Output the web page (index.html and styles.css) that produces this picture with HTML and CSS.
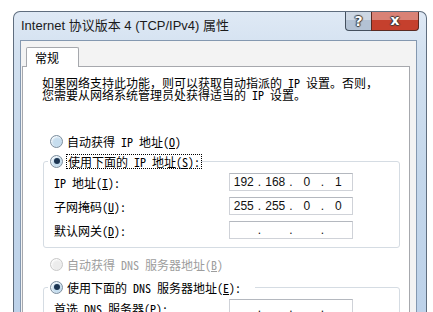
FILE: index.html
```html
<!DOCTYPE html>
<html lang="zh-CN">
<head>
<meta charset="utf-8">
<title>Internet 协议版本 4 (TCP/IPv4) 属性</title>
<link rel="stylesheet" href="styles.css">
</head>
<body>
<div class="window">
  <div class="titlebar">
    <span class="title">Internet 协议版本 4 (TCP/IPv4) 属性</span>
    <div class="caption-btns">
      <div class="cbtn help"><span class="hl"></span><span class="glyph">?</span></div>
      <div class="cbtn close"><span class="hl"></span><span class="glyph">x</span></div>
    </div>
  </div>
  <div class="client">
    <div class="tabs"><div class="tab">常规</div></div>
    <div class="panel">
      <p class="desc">如果网络支持此功能，则可以获取自动指派的 IP 设置。否则，<br>您需要从网络系统管理员处获得适当的 IP 设置。</p>

      <div class="opt opt-first"><span class="radio"></span><span class="lbl">自动获得 IP 地址(<u>O</u>)</span></div>

      <fieldset class="group">
        <legend><div class="opt"><span class="radio checked"></span><span class="lbl focus">使用下面的 IP 地址(<u>S</u>):</span></div></legend>
        <div class="row"><span class="rlabel">IP 地址(<u>I</u>):</span><div class="ipbox"><span class="seg">192</span><span class="dot">.</span><span class="seg">168</span><span class="dot">.</span><span class="seg">0</span><span class="dot">.</span><span class="seg">1</span></div></div>
        <div class="row"><span class="rlabel">子网掩码(<u>U</u>):</span><div class="ipbox"><span class="seg">255</span><span class="dot">.</span><span class="seg">255</span><span class="dot">.</span><span class="seg">0</span><span class="dot">.</span><span class="seg">0</span></div></div>
        <div class="row"><span class="rlabel">默认网关(<u>D</u>):</span><div class="ipbox"><span class="seg"></span><span class="dot">.</span><span class="seg"></span><span class="dot">.</span><span class="seg"></span><span class="dot">.</span><span class="seg"></span></div></div>
      </fieldset>

      <div class="opt opt-dns disabled"><span class="radio"></span><span class="lbl">自动获得 DNS 服务器地址(<u>B</u>)</span></div>

      <fieldset class="group group-dns">
        <legend><div class="opt"><span class="radio checked"></span><span class="lbl wide">使用下面的 DNS 服务器地址(<u>E</u>):</span></div></legend>
        <div class="row"><span class="rlabel">首选 DNS 服务器(<u>P</u>):</span><div class="ipbox"><span class="seg"></span><span class="dot">.</span><span class="seg"></span><span class="dot">.</span><span class="seg"></span><span class="dot">.</span><span class="seg"></span></div></div>
      </fieldset>
    </div>
  </div>
</div>
</body>
</html>
```
FILE: styles.css
```css
* {
  -webkit-print-color-adjust: exact;
  print-color-adjust: exact;
}
html, body {
  margin: 0;
  padding: 0;
  background-color: #ffffff;
}
body {
  width: 433px;
  height: 312px;
  overflow: hidden;
  font-family: "Noto Sans Mono CJK SC", "Noto Sans CJK SC", sans-serif;
  font-size: 12px;
  color: #000;
}

.window {
  margin: 11px 0 0 13px;
  width: 414px;
  height: 320px;
  box-sizing: border-box;
  border: 1px solid #5f6d7e;
  border-bottom: none;
  border-radius: 7px 7px 0 0;
  background-color: #c6d8ec;
  background-image: linear-gradient(to bottom, #dfe9f5 0, #d3e1f0 40px, #c4d7eb 160px, #bcd1e9 320px);
  padding: 0 9px 0 6px;
  display: flex;
  flex-direction: column;
}

.titlebar {
  height: 28px;
  flex: none;
  display: flex;
  justify-content: space-between;
  align-items: flex-start;
}
.title {
  font-family: "Liberation Sans", "Noto Sans CJK SC", sans-serif;
  font-size: 13px;
  line-height: 16px;
  margin: 6px 0 0 1px;
  color: #1b1b1b;
  white-space: nowrap;
}
.caption-btns {
  display: flex;
  flex: none;
  margin-right: -2px;
}
.cbtn {
  position: relative;
  height: 19px;
  box-sizing: border-box;
  border: 1px solid #44505e;
  border-top: none;
  display: flex;
  align-items: center;
  justify-content: center;
  overflow: hidden;
}
.glyph {
  position: relative;
  color: #fff;
  font-family: "DejaVu Sans", sans-serif;
  font-weight: bold;
  font-size: 14px;
  line-height: 1;
  text-shadow: 1px 0 1px #3a3a3a, -1px 0 1px #3a3a3a, 0 1px 1px #3a3a3a, 0 -1px 1px #3a3a3a;
}
.hl {
  position: absolute;
  left: 0;
  right: 0;
  top: 0;
  height: 8px;
  background-color: rgba(255, 255, 255, 0.35);
}
.help {
  width: 26px;
  border-right: none;
  border-radius: 0 0 0 4px;
  background-color: #b3c2d4;
}
.close {
  width: 48px;
  border-radius: 0 0 4px 0;
  border-color: #5a2a22;
  background-color: #c5402d;
  padding-bottom: 2px;
}

.client {
  flex: 1;
  display: flex;
  flex-direction: column;
  border: 1px solid #8498b0;
  border-bottom: none;
  background-color: #f3f3f3;
  padding: 6px 6px 0 1px;
}

.tabs {
  display: flex;
  flex: none;
  position: relative;
  z-index: 1;
  margin-bottom: -1px;
}
.tab {
  margin-left: 4px;
  width: 53px;
  height: 20px;
  box-sizing: border-box;
  border: 1px solid #a6a8ad;
  border-bottom: none;
  border-radius: 2px 2px 0 0;
  background-color: #fff;
  font-family: "Noto Sans CJK SC", sans-serif;
  font-size: 12px;
  line-height: 18px;
  padding: 1px 0 0 8px;
}

.panel {
  flex: 1;
  background-color: #fff;
  border: 1px solid #a6a8ad;
  border-bottom: none;
  padding: 10px 0 0 19px;
}

.desc {
  margin: 0;
  line-height: 12px;
  white-space: nowrap;
}

.opt {
  display: flex;
  align-items: center;
  height: 16px;
  gap: 4px;
  white-space: nowrap;
}
.opt-first {
  margin: 32px 0 0 8px;
}
.opt-dns {
  margin: 8px 0 0 8px;
}
.disabled .lbl {
  color: #9d9d9d;
}
.disabled .radio {
  border-color: #c9c9c9;
  background-color: #ececec;
}
.lbl {
  line-height: 13px;
}
.focus {
  outline: 1px dotted #000;
  outline-offset: 0;
  padding: 0 1px;
}
.wide {
  padding-right: 14px;
}

.radio {
  width: 13px;
  height: 13px;
  flex: none;
  box-sizing: border-box;
  border-radius: 50%;
  border: 1px solid #7f8f9e;
  background-color: #c6ddee;
  box-shadow: inset 1px 1px 2px #ffffff;
  display: flex;
  align-items: center;
  justify-content: center;
}
.radio.checked::after {
  content: "";
  width: 6px;
  height: 6px;
  border-radius: 50%;
  background-color: #1c3552;
}

.group {
  margin: 4px 0 0 1px;
  width: 357px;
  box-sizing: border-box;
  border: 1px solid #d5dce3;
  border-radius: 3px;
  padding: 4px 0 8px 10px;
  min-inline-size: 0;
}
.group legend {
  padding: 0 0 0 2px;
  margin-left: -6px;
}
.group-dns {
  margin-top: 7px;
}

.row {
  display: flex;
  align-items: center;
  height: 18px;
}
.row + .row {
  margin-top: 6px;
}
.rlabel {
  width: 175px;
  flex: none;
  white-space: nowrap;
}
.ipbox {
  width: 124px;
  height: 18px;
  box-sizing: border-box;
  border: 1px solid #cfd2d8;
  border-top-color: #b4b8bf;
  background-color: #fff;
  display: flex;
  align-items: center;
  font-family: "Liberation Sans", Arial, sans-serif;
  font-size: 12px;
  color: #111;
}
.seg {
  flex: 1;
  text-align: center;
}
.dot {
  width: 4px;
  text-align: center;
}
```
